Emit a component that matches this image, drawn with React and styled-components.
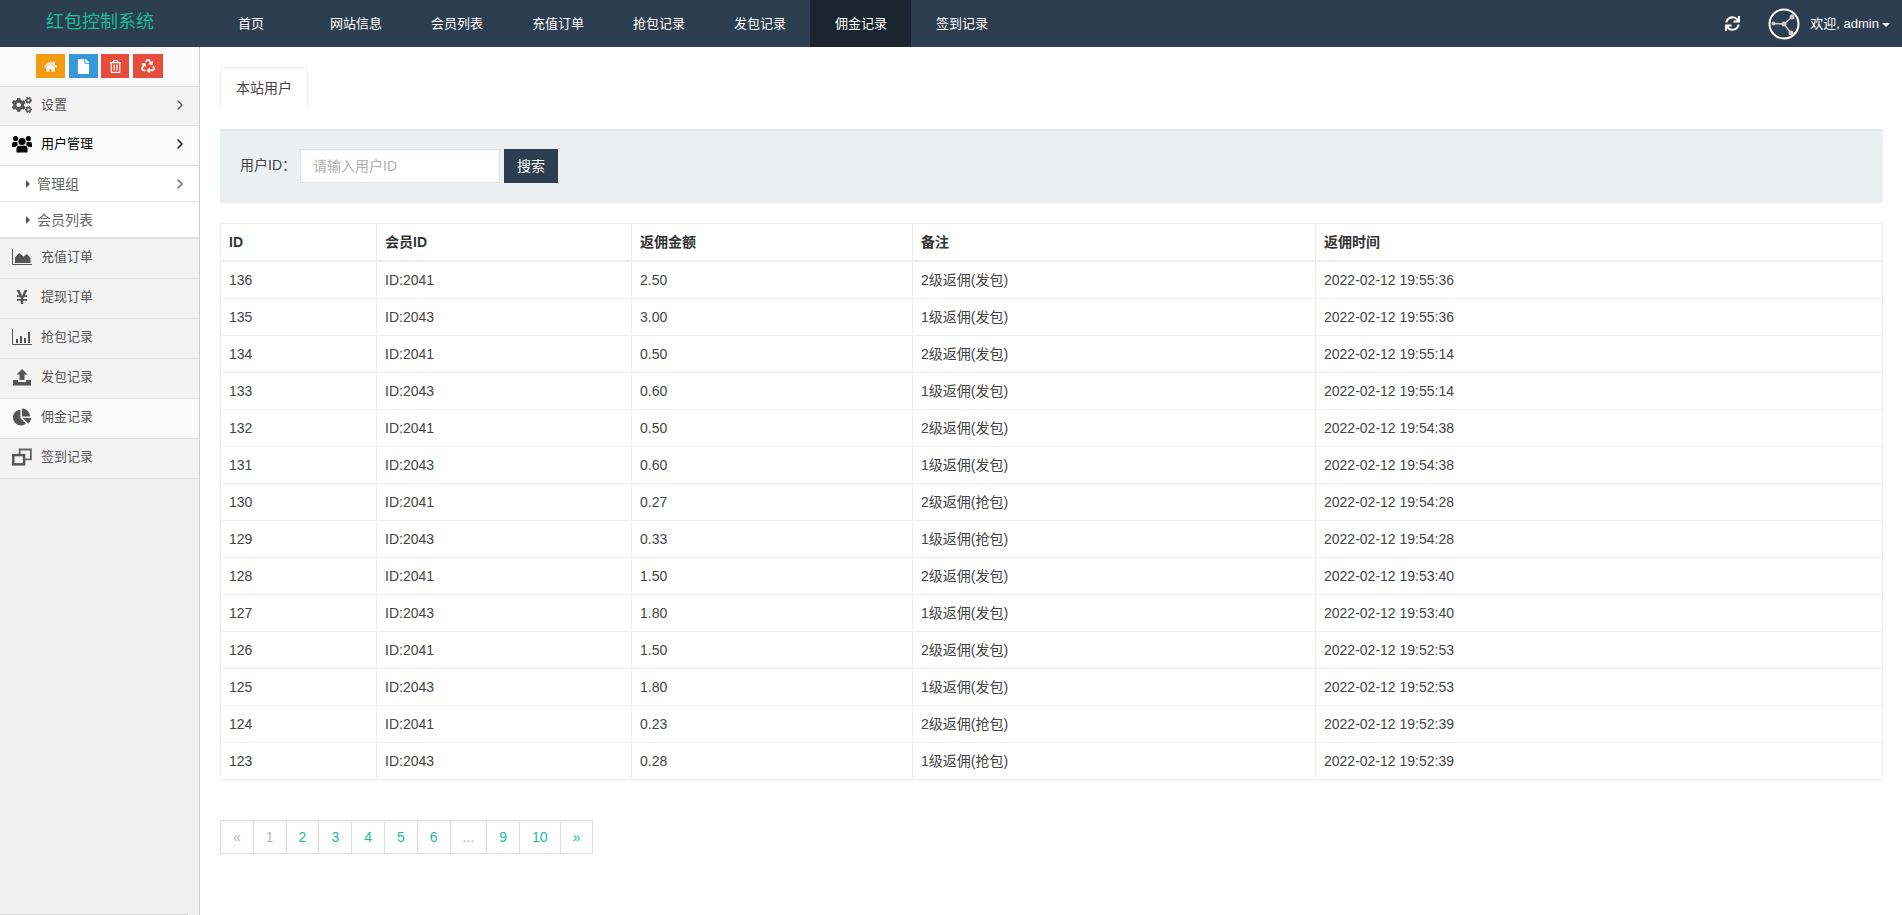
import React from "react";
import styled, { createGlobalStyle } from "styled-components";
import { FaHome, FaFile, FaRegTrashAlt, FaRecycle, FaCogs, FaYenSign, FaChartPie, FaSync } from "react-icons/fa";
import { ChevronRight } from "lucide-react";

const GlobalStyle = createGlobalStyle`
	* { box-sizing: border-box; }
	html, body { margin: 0; height: 100%; background: #fff; }
	body {
		font-family: "Liberation Sans", Arial, "Noto Sans CJK SC", sans-serif;
		font-size: 14px;
		line-height: 20px;
		color: #333;
		overflow: hidden;
	}
`;

const Page = styled.div`
	display: flex;
	flex-direction: column;
	height: 915px;
`;

const TopBar = styled.header`
	display: flex;
	align-items: stretch;
	flex: none;
	height: 47px;
	background: #2c3e50;
`;

const Logo = styled.div`
	width: 200px;
	line-height: 45px;
	text-align: center;
	font-size: 18px;
	color: #1abc9c;
`;

const NavItem = styled.a`
	display: block;
	padding: 0 0 0 ${(p) => (p.$first ? 38 : 25)}px;
	margin-right: ${(p) => (p.$first ? 16 : 0)}px;
	width: ${(p) => (p.$first ? "89px" : "101px")};
	white-space: nowrap;
	line-height: 47px;
	font-size: 13px;
	color: #fff;
	background: ${(p) => (p.$active ? "#1a252f" : "transparent")};
`;

const NavRight = styled.div`
	display: flex;
	align-items: center;
	margin-left: auto;
	padding-right: 12px;
	color: #fff;
	font-size: 13px;
`;

const RefreshIcon = styled(FaSync)`
	width: 15px;
	height: 15px;
	margin-right: 28px;
`;

const Welcome = styled.span`
	margin-left: 10px;
`;

const Caret = styled.span`
	width: 0;
	height: 0;
	margin-left: 3px;
	margin-top: 2px;
	border-left: 4px solid transparent;
	border-right: 4px solid transparent;
	border-top: 4px solid #fff;
`;

const Body = styled.div`
	display: flex;
	flex: 1;
	min-height: 0;
`;

const Sidebar = styled.aside`
	display: flex;
	flex-direction: column;
	flex: none;
	width: 200px;
	background: #f1f1f1;
	border-right: 1px solid #ccc;
`;

const ShortcutBar = styled.div`
	display: flex;
	height: 40px;
	padding: 7px 0 0 36px;
	background: #fafafa;
	border-bottom: 1px solid #e0e0e0;
`;

const Shortcut = styled.button`
	display: flex;
	align-items: center;
	justify-content: center;
	width: ${(p) => p.$w}px;
	height: 24px;
	margin-left: ${(p) => p.$gap || 0}px;
	padding: 0;
	border: 0;
	color: #fff;
	font-size: ${(p) => p.$size}px;
	background: ${(p) => p.$bg};
`;

const MenuRow = styled.div`
	display: flex;
	align-items: center;
	flex: none;
	height: ${(p) => p.$h || 40}px;
	padding: 0 0 3px 12px;
	font-size: 13px;
	color: ${(p) => (p.$open ? "#000" : "#555")};
	background: ${(p) => (p.$open || p.$light ? "#fafafa" : "#f3f3f3")};
	border-bottom: 1px solid #e2e2e2;
`;

const MenuIcon = styled.span`
	display: flex;
	justify-content: center;
	flex: none;
	width: 20px;
	margin-right: 9px;
	font-size: ${(p) => p.$size || 16}px;
`;

const SubRow = styled.div`
	display: flex;
	align-items: center;
	flex: none;
	height: ${(p) => p.$h}px;
	padding-left: 26px;
	font-size: 14px;
	color: #666;
	background: #fff;
	border-bottom: ${(p) => (p.$last ? 2 : 1)}px solid #e2e2e2;
`;

const SubArrow = styled.span`
	width: 0;
	height: 0;
	margin-right: 7px;
	border-top: 4px solid transparent;
	border-bottom: 4px solid transparent;
	border-left: 4px solid #555;
`;

const Chevron = styled(ChevronRight)`
	width: 16px;
	height: 16px;
	margin-left: auto;
	margin-right: 11px;
`;

const SideFoot = styled.div`
	margin-top: auto;
	width: 188px;
	height: 1px;
	background: #d5d5d5;
`;

const Main = styled.main`
	flex: 1;
	min-width: 0;
	padding: 20px 19px 0 20px;
`;

const Tabs = styled.div`
	display: flex;
	height: 41px;
	margin-bottom: 21px;
`;

const Tab = styled.div`
	padding: 10px 15px;
	border: 1px solid #eee;
	border-bottom: 0;
	color: #444;
`;

const SearchPanel = styled.form`
	display: flex;
	align-items: center;
	height: 74px;
	margin-bottom: 20px;
	padding: 0 0 2px 20px;
	background: #ecf0f1;
	border-top: 2px solid #e4e8e9;
`;

const SearchLabel = styled.label`
	width: 60px;
	margin-top: -2px;
	color: #444;
`;

const SearchInput = styled.input`
	width: 200px;
	height: 34px;
	padding: 6px 12px;
	border: 1px solid #dce4ec;
	outline: 0;
	background: #fff;
	font: inherit;
	&::placeholder { color: #b0b0b0; }
`;

const SearchButton = styled.button`
	width: 54px;
	height: 34px;
	margin-left: 4px;
	padding: 0;
	border: 0;
	background: #2c3e50;
	color: #fff;
	font: inherit;
`;

const Table = styled.table`
	width: 100%;
	table-layout: fixed;
	border-collapse: collapse;
	border: 1px solid #eee;
`;

const Th = styled.th`
	padding: 8px;
	text-align: left;
	font-weight: bold;
	color: #333;
	border: 1px solid #eee;
	border-bottom-width: 2px;
`;

const Td = styled.td`
	padding: 8px;
	color: #444;
	border: 1px solid #eee;
`;

const Pagination = styled.div`
	display: flex;
	margin-top: 40px;
`;

const PageLink = styled.a`
	padding: 6px 12px;
	margin-left: -1px;
	border: 1px solid #ddd;
	color: ${(p) => (p.$muted ? "#b4b4b4" : "#1abc9c")};
	&:first-child { margin-left: 0; }
`;

const UsersIcon = () => (
	<svg width="20" height="18" viewBox="0 0 20 18" fill="#000">
		<circle cx="10" cy="6.5" r="3.6" />
		<path d="M4.5 17.5V14Q4.5 10.8 7.5 10.8H12.5Q15.5 10.8 15.5 14V17.5Z" />
		<circle cx="3.6" cy="3.6" r="2.6" />
		<circle cx="16.4" cy="3.6" r="2.6" />
		<path d="M0 12V9Q0 7 2 7H5.6Q5 9 6 10.2Q3.6 10.8 3.4 12Z" />
		<path d="M20 12V9Q20 7 18 7H14.4Q15 9 14 10.2Q16.4 10.8 16.6 12Z" />
	</svg>
);

const AreaIcon = () => (
	<svg width="20" height="18" viewBox="0 0 20 18" fill="#555">
		<path d="M0.5 1V16.5H20.5" fill="none" stroke="#555" />
		<path d="M3 15V9.5L7 5L11.5 8.5L15 6L18.5 10V15Z" />
	</svg>
);

const BarsIcon = () => (
	<svg width="20" height="18" viewBox="0 0 20 18" fill="#555">
		<path d="M0.5 1V16.5H20.5" fill="none" stroke="#555" />
		<path d="M4 11H6V15H4ZM8 8H10V15H8ZM12 10H14V15H12ZM16 4H18V15H16Z" />
	</svg>
);

const UploadIcon = () => (
	<svg width="20" height="18" viewBox="0 0 20 18" fill="#555">
		<path d="M10 1L15.5 6.5H12.5V12H7.5V6.5H4.5Z" />
		<path d="M1 12H6V14H14V12H19V17.5H1Z" />
	</svg>
);

const CloneIcon = () => (
	<svg width="21" height="18" viewBox="0 0 21 18" fill="none" stroke="#555">
		<path d="M8 6V1.2H19.8V11.5H14" strokeWidth="2" stroke="#666" />
		<rect x="1.3" y="7" width="11.4" height="9.7" strokeWidth="2.6" />
	</svg>
);

const ShareIcon = () => (
	<svg width="32" height="32" viewBox="0 0 32 32" fill="none">
		<circle cx="16" cy="16" r="14.5" stroke="#fff" strokeWidth="2" />
		<path d="M5 15.5 L16 16 L24 9 M16 16 L23 25" stroke="#ccc" strokeWidth="1.5" />
		<circle cx="5.5" cy="15.5" r="2" fill="#ccc" />
		<circle cx="16" cy="16" r="2.5" fill="#ccc" />
		<circle cx="24" cy="9" r="2.5" fill="#ccc" />
		<circle cx="23" cy="25" r="2.5" fill="#ccc" />
	</svg>
);

const navItems = ["网站信息", "会员列表", "充值订单", "抢包记录", "发包记录", "佣金记录", "签到记录"];

const menuBottom = [
	{ label: "充值订单", icon: <AreaIcon /> },
	{ label: "提现订单", icon: <FaYenSign />, size: 16 },
	{ label: "抢包记录", icon: <BarsIcon /> },
	{ label: "发包记录", icon: <UploadIcon /> },
	{ label: "佣金记录", icon: <FaChartPie />, size: 18, light: true },
	{ label: "签到记录", icon: <CloneIcon /> },
];

const rows = [
	[136, 2041, "2.50", 2, "发包", "19:55:36"],
	[135, 2043, "3.00", 1, "发包", "19:55:36"],
	[134, 2041, "0.50", 2, "发包", "19:55:14"],
	[133, 2043, "0.60", 1, "发包", "19:55:14"],
	[132, 2041, "0.50", 2, "发包", "19:54:38"],
	[131, 2043, "0.60", 1, "发包", "19:54:38"],
	[130, 2041, "0.27", 2, "抢包", "19:54:28"],
	[129, 2043, "0.33", 1, "抢包", "19:54:28"],
	[128, 2041, "1.50", 2, "发包", "19:53:40"],
	[127, 2043, "1.80", 1, "发包", "19:53:40"],
	[126, 2041, "1.50", 2, "发包", "19:52:53"],
	[125, 2043, "1.80", 1, "发包", "19:52:53"],
	[124, 2041, "0.23", 2, "抢包", "19:52:39"],
	[123, 2043, "0.28", 1, "抢包", "19:52:39"],
];

const columns = [
	{ title: "ID", width: 156 },
	{ title: "会员ID", width: 255 },
	{ title: "返佣金额", width: 281 },
	{ title: "备注", width: 403 },
	{ title: "返佣时间" },
];

const pages = [
	{ label: "«", muted: true },
	{ label: "1", muted: true },
	{ label: "2" },
	{ label: "3" },
	{ label: "4" },
	{ label: "5" },
	{ label: "6" },
	{ label: "...", muted: true },
	{ label: "9" },
	{ label: "10" },
	{ label: "»" },
];

const App = () => (
	<Page>
		<GlobalStyle />
		<TopBar>
			<Logo>红包控制系统</Logo>
			<NavItem $first>首页</NavItem>
			{navItems.map((item) => (
				<NavItem key={item} $active={item === "佣金记录"}>
					{item}
				</NavItem>
			))}
			<NavRight>
				<RefreshIcon />
				<ShareIcon />
				<Welcome>欢迎, admin</Welcome>
				<Caret />
			</NavRight>
		</TopBar>
		<Body>
			<Sidebar>
				<ShortcutBar>
					<Shortcut $w={29} $size={13} $bg="#f39c12"><FaHome /></Shortcut>
					<Shortcut $w={29} $size={15} $gap={4} $bg="#3498db"><FaFile /></Shortcut>
					<Shortcut $w={28} $size={13} $gap={3} $bg="#e74c3c"><FaRegTrashAlt /></Shortcut>
					<Shortcut $w={30} $size={14} $gap={4} $bg="#e74c3c"><FaRecycle /></Shortcut>
				</ShortcutBar>
				<MenuRow $h={39}>
					<MenuIcon $size={20}><FaCogs /></MenuIcon>
					设置
					<Chevron />
				</MenuRow>
				<MenuRow $open>
					<MenuIcon><UsersIcon /></MenuIcon>
					用户管理
					<Chevron />
				</MenuRow>
				<SubRow $h={36}>
					<SubArrow />
					管理组
					<Chevron />
				</SubRow>
				<SubRow $h={37} $last>
					<SubArrow />
					会员列表
				</SubRow>
				{menuBottom.map((item) => (
					<MenuRow key={item.label} $light={item.light}>
						<MenuIcon $size={item.size}>{item.icon}</MenuIcon>
						{item.label}
					</MenuRow>
				))}
				<SideFoot />
			</Sidebar>
			<Main>
				<Tabs>
					<Tab>本站用户</Tab>
				</Tabs>
				<SearchPanel>
					<SearchLabel>用户ID：</SearchLabel>
					<SearchInput placeholder="请输入用户ID" />
					<SearchButton type="button">搜索</SearchButton>
				</SearchPanel>
				<Table>
					<colgroup>
						{columns.map((col) => (
							<col key={col.title} width={col.width} />
						))}
					</colgroup>
					<thead>
						<tr>
							{columns.map((col) => (
								<Th key={col.title}>{col.title}</Th>
							))}
						</tr>
					</thead>
					<tbody>
						{rows.map(([id, member, amount, level, kind, time]) => (
							<tr key={id}>
								<Td>{id}</Td>
								<Td>ID:{member}</Td>
								<Td>{amount}</Td>
								<Td>{level}级返佣({kind})</Td>
								<Td>2022-02-12 {time}</Td>
							</tr>
						))}
					</tbody>
				</Table>
				<Pagination>
					{pages.map((p) => (
						<PageLink key={p.label} $muted={p.muted}>
							{p.label}
						</PageLink>
					))}
				</Pagination>
			</Main>
		</Body>
	</Page>
);

export default App;
